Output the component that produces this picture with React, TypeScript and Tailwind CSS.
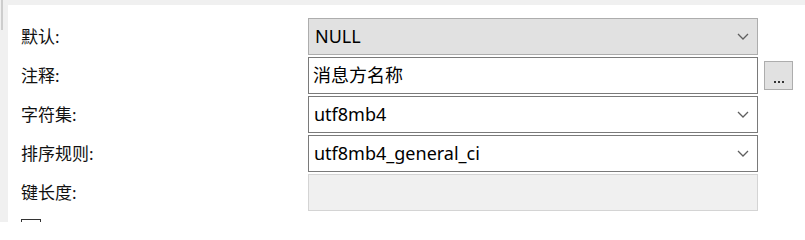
import React from "react";

const font = { fontFamily: '"Noto Sans", "Noto Sans CJK SC", sans-serif' };

function Chevron() {
  return (
    <svg width="12" height="7" viewBox="0 0 12 7" className="shrink-0">
      <polyline points="1,1 6,6 11,1" fill="none" stroke="#5f5f5f" strokeWidth="1.3" />
    </svg>
  );
}

function Row({ label, children, extra }: { label: string; children: React.ReactNode; extra?: React.ReactNode }) {
  return (
    <div className="flex items-center h-[37px]">
      <div className="w-[287px] shrink-0 text-[17px] text-[#111] leading-none">{label}</div>
      <div className="w-[450px] h-[37px] shrink-0">{children}</div>
      {extra}
    </div>
  );
}

export default function App() {
  return (
    <div className="w-[805px] h-[222px] bg-[#f0f0f0] flex flex-col overflow-hidden" style={font}>
      <div className="h-[5px] shrink-0 bg-[#f0f0f0]" />
      <div className="flex flex-1 min-h-0">
        <div className="w-[8px] shrink-0 bg-[#f0f0f0] relative">
          <div className="absolute left-[1px] top-[-5px] w-[2px] h-[30px] bg-[#cdcdcd]" />
        </div>
        <div className="flex-1 bg-white pl-[13px] pt-[13px] flex flex-col gap-[2px]">
          <Row label="默认:">
            <div className="h-full bg-[#e1e1e1] border border-[#adadad] flex items-center justify-between pl-[6px] pr-[8px] text-[18px] text-black">
              <span>NULL</span>
              <Chevron />
            </div>
          </Row>
          <Row
            label="注释:"
            extra={
              <div className="ml-[6px] w-[29px] h-[29px] bg-[#e1e1e1] border border-[#adadad] flex items-end justify-center pb-[6px]">
                <div className="flex gap-[2px]">
                  <div className="w-[2px] h-[2px] bg-[#333]" />
                  <div className="w-[2px] h-[2px] bg-[#333]" />
                  <div className="w-[2px] h-[2px] bg-[#333]" />
                </div>
              </div>
            }
          >
            <div className="h-full bg-white border border-[#7a7a7a] flex items-center pl-[4px] text-[18px] text-black">
              消息方名称
            </div>
          </Row>
          <Row label="字符集:">
            <div className="h-full bg-white border border-[#7a7a7a] flex items-center justify-between pl-[5px] pr-[8px] text-[18px] text-black">
              <span>utf8mb4</span>
              <Chevron />
            </div>
          </Row>
          <Row label="排序规则:">
            <div className="h-full bg-white border border-[#7a7a7a] flex items-center justify-between pl-[5px] pr-[8px] text-[18px] text-black">
              <span>utf8mb4_general_ci</span>
              <Chevron />
            </div>
          </Row>
          <Row label="键长度:">
            <div className="h-full bg-[#f0f0f0] border border-[#d4d4d4]" />
          </Row>
          <div className="mt-[6px] w-[20px] h-[20px] border border-[#333] bg-white shrink-0" />
        </div>
      </div>
    </div>
  );
}
